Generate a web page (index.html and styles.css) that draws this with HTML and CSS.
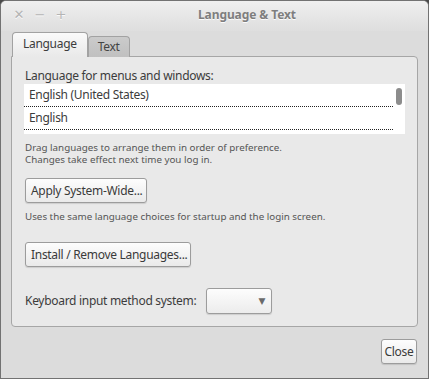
FILE: index.html
```html
<!DOCTYPE html>
<html lang="en">
<head>
  <meta charset="UTF-8" />
  <title>Language &amp; Text</title>
  <link rel="stylesheet" href="styles.css">
</head>
<body>
  <div class="window">
    <div class="titlebar">
      <div class="controls">
        <span class="ctl">&#x2715;</span>
        <span class="ctl">&#x2212;</span>
        <span class="ctl">+</span>
      </div>
      <div class="title">Language &amp; Text</div>
    </div>

    <div class="tabs">
      <div class="tab active">Language</div>
      <div class="tab">Text</div>
    </div>

    <div class="panel">
      <div class="label">Language for menus and windows:</div>
      <div class="list">
        <div class="row">English (United States)</div>
        <div class="row">English</div>
        <div class="thumb"></div>
      </div>
      <p class="hint">Drag languages to arrange them in order of preference.<br>Changes take effect next time you log in.</p>
      <button class="btn first">Apply System-Wide...</button>
      <p class="hint note">Uses the same language choices for startup and the login screen.</p>
      <button class="btn second">Install / Remove Languages...</button>
      <div class="input-row">
        <span class="label">Keyboard input method system:</span>
        <div class="combo"><span class="arrow">&#x25BC;</span></div>
      </div>
    </div>

    <div class="footer">
      <button class="btn close">Close</button>
    </div>
  </div>
</body>
</html>
```

FILE: styles.css
```css
body {
  margin: 0;
  background: #4a4a4a;
  font-family: 'Noto Sans', sans-serif;
  color: #3c3c3c;
}

.window {
  width: 429px;
  height: 379px;
  box-sizing: border-box;
  border: 1px solid #727272;
  border-radius: 6px 6px 0 0;
  background: #dcdcdc;
  overflow: hidden;
}

.titlebar {
  height: 30px;
  display: flex;
  align-items: center;
  background: linear-gradient(#efefef, #dedede);
  position: relative;
}

.controls {
  display: flex;
  gap: 7px;
  padding-left: 11px;
  margin-top: -4px;
}

.ctl {
  width: 14px;
  text-align: center;
  font-size: 13px;
  font-family: 'DejaVu Sans', sans-serif;
  color: #b4b4b4;
  text-shadow: 0 1px #fafafa;
}

.title {
  position: absolute;
  left: 197px;
  top: 5px;
  font-size: 12px;
  font-weight: bold;
  letter-spacing: -0.1px;
  color: #7e7e7e;
  text-shadow: 0 1px #fbfbfb;
}

.tabs {
  display: flex;
  align-items: flex-end;
  height: 25px;
  padding-left: 11px;
}

.tab {
  height: 21px;
  box-sizing: border-box;
  padding: 0 9px;
  font-size: 12px;
  letter-spacing: -0.3px;
  line-height: 20px;
  color: #444;
  background: linear-gradient(#cbcbcb, #c0c0c0);
  border: 1px solid #a2a2a2;
  border-bottom: none;
  border-radius: 4px 4px 0 0;
  margin-bottom: -1px;
}

.tab.active {
  height: 25px;
  padding: 1px 10px 0 10px;
  color: #3c3c3c;
  background: linear-gradient(#fafafa, #e9e9e9);
  position: relative;
  z-index: 1;
}

.panel {
  margin: 0 10px 0 10px;
  height: 271px;
  box-sizing: border-box;
  padding: 11px 12px 0 12px;
  background: #e9e9e9;
  border: 1px solid #a6a6a6;
  border-radius: 0 4px 4px 4px;
}

.label {
  font-size: 12px;
  letter-spacing: -0.3px;
  line-height: 16px;
  padding-left: 1px;
}

.list {
  position: relative;
  height: 50px;
  background: #fff;
}

.row {
  height: 22px;
  line-height: 21px;
  padding-left: 5px;
  font-size: 12px;
  letter-spacing: -0.3px;
  border-bottom: 1px dotted #222;
  margin-right: 12px;
}

.thumb {
  position: absolute;
  right: 3px;
  top: 4px;
  width: 6px;
  height: 17px;
  border-radius: 3px;
  background: #8c8c8c;
}

.hint {
  margin: 8px 0 0 1px;
  font-size: 9.8px;
  line-height: 11.5px;
  color: #555;
}

.hint.note {
  margin-top: 8px;
}

.btn {
  display: block;
  height: 25px;
  box-sizing: border-box;
  padding: 0 5px;
  white-space: nowrap;
  font-family: 'Noto Sans', sans-serif;
  font-size: 12px;
  letter-spacing: -0.3px;
  color: #3a3a3a;
  background: linear-gradient(#fdfdfd, #eaeaea);
  border: 1px solid #9c9c9c;
  border-radius: 3px;
  box-shadow: 0 1px 1px rgba(0, 0, 0, 0.12);
}

.btn.first {
  margin: 13px 0 0 1px;
  width: 122px;
}

.btn.second {
  margin: 19px 0 0 1px;
  width: 166px;
}

.input-row {
  display: flex;
  align-items: center;
  margin-top: 21px;
  gap: 10px;
}

.combo {
  width: 66px;
  height: 26px;
  box-sizing: border-box;
  background: linear-gradient(#fdfdfd, #ececec);
  border: 1px solid #9c9c9c;
  border-radius: 3px;
  display: flex;
  align-items: center;
  justify-content: flex-end;
  padding-right: 6px;
  box-shadow: 0 1px 1px rgba(0, 0, 0, 0.12);
}

.arrow {
  font-size: 9px;
  color: #6a6a6a;
  font-family: 'DejaVu Sans', sans-serif;
}

.footer {
  display: flex;
  justify-content: flex-end;
  padding: 12px 11px 0 0;
}

.btn.close {
  width: 36px;
  padding: 0;
}
```
